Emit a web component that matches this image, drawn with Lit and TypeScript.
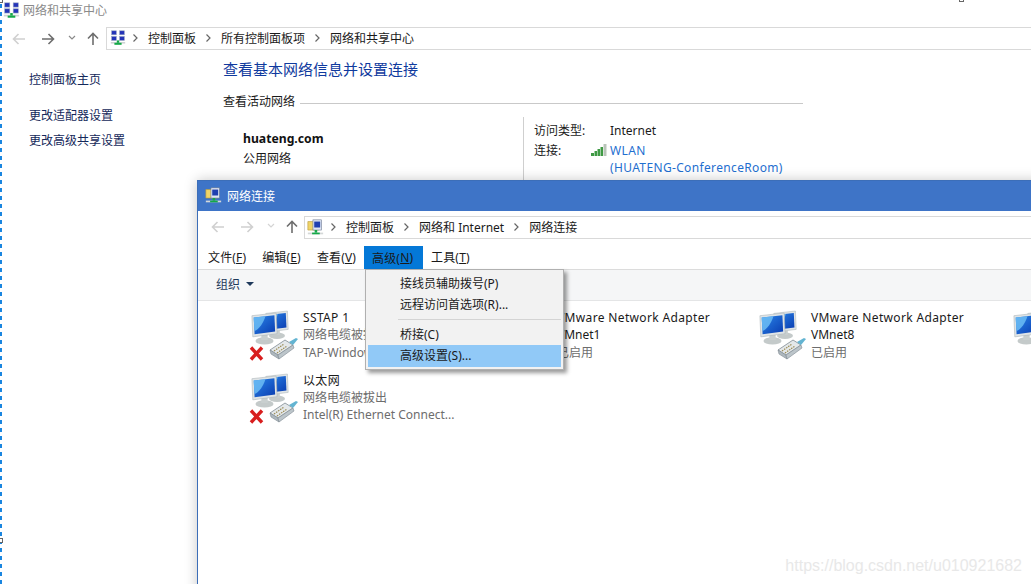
import { LitElement, html, css, svg } from "lit";
import { customElement } from "lit/decorators.js";

const netIcon = (size: number, kind: "grid" | "folder") => html`
  <svg class="small-ico" width=${size} height=${size} viewBox="0 0 20 20">
    ${kind === "folder"
      ? svg`<path d="M1 3h6l1 1h6v9H1z" fill="#f0d468" stroke="#b89a3a" stroke-width=".7"/>
            <rect x="7" y="1" width="10" height="12" fill="#dfe6f2" stroke="#6b7690" stroke-width=".7"/>
            <rect x="8.500" y="3" width="7" height="7" fill="#1f3fb0"/>
            <rect x="1" y="16" width="18" height="2" fill="#d4d8d8"/>
            <rect x="9" y="13" width="3" height="3" fill="#14a848"/><rect x="6" y="16" width="9" height="2" fill="#14a848"/>`
      : svg`<rect x="2" y="1" width="6" height="5" fill="#2434b8" stroke="#9aa8c0" stroke-width=".7"/>
            <rect x="12" y="1" width="6" height="5" fill="#2434b8" stroke="#9aa8c0" stroke-width=".7"/>
            <rect x="2" y="8" width="6" height="5" fill="#2434b8" stroke="#9aa8c0" stroke-width=".7"/>
            <rect x="12" y="8" width="6" height="5" fill="#2434b8" stroke="#9aa8c0" stroke-width=".7"/>
            <rect x="1" y="15" width="18" height="2" fill="#cfd4d4"/>
            <rect x="8.500" y="13" width="3" height="3" fill="#14a848"/><rect x="5.500" y="16" width="9" height="2.500" fill="#14a848"/>`}
  </svg>`;

const monitor = (dx: number, dy: number, s: number) => svg`
  <g transform="translate(${dx} ${dy}) scale(${s})">
    <ellipse cx="15" cy="31" rx="10" ry="4" fill="#c4caca"/>
    <rect x="11.500" y="24" width="7" height="6" fill="#c9cfcf"/>
    <path d="M1 3 L28 0 L29 23 L2 26.500 Z" fill="#dfe4e6" stroke="#a7b0b4" stroke-width=".6"/>
    <path d="M3 5 L26 2.500 L26.800 20.500 L4 23.500 Z" fill="url(#scr)"/>
    <path d="M3 5 L16 3.600 C14 11 9 18 3.800 20 Z" fill="#6cbdf5" opacity=".85"/>
  </g>`;

const adapterIcon = (cross: boolean) => html`
  <svg class="adapter" width="50" height="52" viewBox="0 0 50 52">
    <defs><linearGradient id="scr" x1="0" y1="0" x2="1" y2="1">
      <stop offset="0" stop-color="#2a86ea"/><stop offset="1" stop-color="#0a3cb0"/></linearGradient></defs>
    ${monitor(17, 2, 0.8)}
    ${monitor(3, 4, 0.9)}
    <path d="M22 41 L37 31 L45 36 L30 46 Z" fill="#e4e8ea" stroke="#7f8a92" stroke-width=".8"/>
    <path d="M22 41 L23 45 L31 50 L30 46 Z" fill="#aeb8be" stroke="#7f8a92" stroke-width=".6"/>
    <path d="M31 50 L46 39 L45 36 L30 46 Z" fill="#bcc5ca" stroke="#7f8a92" stroke-width=".6"/>
    <path d="M26 42 L36 35 M29 44 L39 37" stroke="#9a8a52" stroke-width="1.200" stroke-dasharray="1.500 1"/>
    <path d="M41 33 L48 29 L50 30 L45 36 Z" fill="#63b4d2"/>
    ${cross ? svg`<path d="M3 38.500 L14 50.500 M14 38.500 L3 50.500" stroke="#d81e1e" stroke-width="3.400"/>` : ""}
  </svg>`;

const arrow = (d: string, c: string, w = 1.6) => html`
  <svg width="16" height="16" viewBox="0 0 16 16"><path d=${d} fill="none" stroke=${c} stroke-width=${w}/></svg>`;
const LEFT = "M14 8H2.500M7.500 3L2.500 8l5 5";
const RIGHT = "M2 8h11.500M8.500 3l5 5-5 5";
const UP = "M8 14V2.500M3 7.500l5-5 5 5";

const sep = html`<svg class="sep" width="5" height="8" viewBox="0 0 5 8"><path d="M.5 .5L4 4 .5 7.500" fill="none" stroke="#666" stroke-width="1.200"/></svg>`;

const adapters = [
  { n: "SSTAP 1", a: "网络电缆被拔出", b: "TAP-Windows Adapter V9", x: true },
  { n: "VMware Network Adapter", a: "VMnet1", b: "已启用", x: false, dark: true },
  { n: "VMware Network Adapter", a: "VMnet8", b: "已启用", x: false, dark: true },
  { n: "", a: "", b: "", x: false, dark: true },
  { n: "以太网", a: "网络电缆被拔出", b: "Intel(R) Ethernet Connect...", x: true },
];

@customElement("app-root")
export class AppRoot extends LitElement {
  static styles = css`
    :host { display: block; width: 1031px; height: 584px; position: relative; overflow: hidden; background: #fff;
      font-family: "Noto Sans", "Noto Sans CJK SC", sans-serif; font-size: 12px; color: #1a1a1a; }
    .dash { position: absolute; left: 0; top: 4px; bottom: 0; width: 2px; background: repeating-linear-gradient(180deg, #1a86e0 0 4px, transparent 4px 8px); }
    .handle { position: absolute; box-sizing: border-box; border: 1px solid #666; background: #fff; }
    .h-top { left: 959px; top: -3px; width: 5px; height: 5px; }
    .h-left { left: -2px; top: 538px; width: 5px; height: 5px; }
    .h-corner { left: -2px; top: -2px; width: 5px; height: 5px; }
    .back { display: flex; flex-direction: column; height: 100%; }
    .b-title { height: 27px; display: flex; align-items: flex-start; gap: 3px; padding: 2px 0 0 3px; color: #8a8a8a; font-size: 12px; flex: none; box-sizing: border-box; line-height: 16px; }
    .b-title span { padding-top: 1px; }
    .b-nav { height: 23px; display: flex; align-items: center; padding-left: 11px; flex: none; }
    .navbtns { display: flex; align-items: center; }
    .b-nav .navbtns { gap: 13px; width: 95px; }
    .caretbox { margin: 0 -8px 0 -5px; }
    .addr { flex: 1; height: 23px; box-sizing: border-box; border: 1px solid #d9d9d9; border-right: 0; display: flex; align-items: center; padding: 0 0 2px 3px; gap: 10px; color: #1a1a1a; white-space: nowrap; }
    .addr .small-ico { margin-right: -3px; }
    .b-body { flex: 1; display: grid; grid-template-columns: 223px 1fr; }
    .side { padding: 21px 0 0 29px; color: #14285a; }
    .side div { line-height: 18px; }
    .side .first { margin-bottom: 18px; }
    .side .second { margin-bottom: 7px; }
    .main { padding-top: 8px; }
    .h1 { font-size: 15px; line-height: 22px; color: #0f3a9e; }
    .sect { display: flex; align-items: center; gap: 5px; width: 580px; margin-top: 13px; line-height: 18px; }
    .sect i { flex: 1; height: 1px; background: #c9c9c9; margin-top: 3px; }
    .net { display: grid; grid-template-columns: 300px 1fr; margin-top: 6px; }
    .net-l { padding: 13px 0 0 20px; }
    .net-l b { display: block; font-size: 12.2px; line-height: 18px; color: #111; margin-bottom: 1px; }
    .net-l span { line-height: 20px; }
    .net-r { border-left: 1px solid #cfcfcf; padding: 4px 0 0 10px; height: 70px; }
    .kv { display: grid; grid-template-columns: 57px 19px auto; line-height: 20px; }
    .kv .val { grid-column: 3; }
    .kv .link { color: #1f6fd0; line-height: 17px; padding-top: 1px; letter-spacing: .35px; }
    .sig { align-self: start; margin-top: 3px; }

    .win { position: absolute; left: 197px; top: 180px; width: 900px; height: 420px; box-sizing: border-box; background: #fff; border: 1px solid #3c6eb8; box-shadow: 0 0 12px rgba(0,0,0,.22); display: flex; flex-direction: column; }
    .w-title { height: 30px; background: #3e74c7; color: #fff; display: flex; align-items: center; gap: 5px; padding: 0 0 1px 7px; box-sizing: border-box; flex: none; font-size: 12px; }
    .w-nav { height: 32px; display: flex; align-items: center; padding-left: 12px; flex: none; }
    .w-nav .navbtns { gap: 13px; width: 94px; }
    .w-nav .addr { height: 23px; padding: 0 0 0 2px; }
    .menus { height: 27px; display: flex; flex: none; border-bottom: 1px solid #dcdcdc; box-sizing: border-box; padding-left: 2px; align-items: stretch; }
    .menus span { padding: 2px 8px 0; display: flex; align-items: center; box-sizing: border-box; letter-spacing: .15px; }
    .menus span.on { background: #0478d7; margin-top: 3px; padding-top: 0; width: 59px; }
    .menus u { text-underline-offset: 1px; }
    .tool { height: 31px; background: #f5f6f7; border-bottom: 1px solid #e4e5e6; flex: none; display: flex; align-items: center; padding: 0 0 2px 18px; gap: 6px; box-sizing: border-box; color: #1e395b; }
    .caret { width: 0; height: 0; border: 4px solid transparent; border-top: 4px solid #1e395b; border-bottom: 0; }
    .list { display: grid; grid-template-columns: repeat(4, 254px); grid-auto-rows: 62.5px; padding: 8px 0 0 50px; }
    .item { display: flex; gap: 5px; }
    .info { line-height: 17.5px; white-space: nowrap; }
    .info .g { color: #6d6d6d; }
    .info .d { color: #1a1a1a; }
    .info .name { letter-spacing: .35px; line-height: 17px; }
    .menu { position: absolute; left: 365px; top: 269px; width: 199px; box-sizing: border-box; height: 101px; background: #f2f2f2; border: 1px solid #b0b0b0; box-shadow: 3px 3px 4px rgba(0,0,0,.4); padding: 3px 2px; color: #1a1a1a; }
    .mi { height: 21px; line-height: 21px; padding-left: 32px; }
    .mi.sel { background: #91c9f7; height: 22px; line-height: 21px; }
    .msep { height: 1px; background: #d4d4d4; margin: 4px 0 4px 30px; }
    .wm { position: absolute; right: 9px; top: 557px; font-family: "Liberation Sans", sans-serif; font-size: 16px; color: #e8e8e8; line-height: 18px; }
  `;

  render() {
    return html`
      <div class="back">
        <div class="b-title">${netIcon(17, "grid")}<span>网络和共享中心</span></div>
        <div class="b-nav">
          <div class="navbtns">
            ${arrow(LEFT, "#d0d0d0")}
            ${arrow(RIGHT, "#6e6e6e")}
            <span class="caretbox">${arrow("M5 7l3 3 3-3", "#8a8a8a", 1.2)}</span>
            ${arrow(UP, "#6e6e6e")}
          </div>
          <div class="addr">
            ${netIcon(16, "grid")} ${sep}
            <span>控制面板</span>${sep}<span>所有控制面板项</span>${sep}<span>网络和共享中心</span>
          </div>
        </div>
        <div class="b-body">
          <div class="side">
            <div class="first">控制面板主页</div>
            <div class="second">更改适配器设置</div>
            <div>更改高级共享设置</div>
          </div>
          <div class="main">
            <div class="h1">查看基本网络信息并设置连接</div>
            <div class="sect"><span>查看活动网络</span><i></i></div>
            <div class="net">
              <div class="net-l"><b>huateng.com</b><span>公用网络</span></div>
              <div class="net-r">
                <div class="kv"><span>访问类型:</span><span class="val">Internet</span></div>
                <div class="kv">
                  <span>连接:</span>
                  <svg class="sig" width="16" height="12" viewBox="0 0 16 12">
                    <path d="M0 9h3v3H0zM3.500 7h2.500v5H3.500zM6.500 5h2.500v7H6.500zM9.500 3h2.500v9H9.500z" fill="#3f9a44"/>
                    <path d="M12.500 0h3v12h-3z" fill="#b9c4b9"/>
                  </svg>
                  <div class="link">WLAN<br />(HUATENG-ConferenceRoom)</div>
                </div>
              </div>
            </div>
          </div>
        </div>
      </div>
      <div class="dash"></div>
      <div class="handle h-top"></div>
      <div class="handle h-left"></div>
      <div class="handle h-corner"></div>

      <div class="win">
        <div class="w-title">${netIcon(17, "folder")}<span>网络连接</span></div>
        <div class="w-nav">
          <div class="navbtns">
            ${arrow(LEFT, "#d0d0d0")}
            ${arrow(RIGHT, "#d0d0d0")}
            <span class="caretbox">${arrow("M5 7l3 3 3-3", "#d4d4d4", 1.2)}</span>
            ${arrow(UP, "#6e6e6e")}
          </div>
          <div class="addr">
            ${netIcon(17, "folder")} ${sep}
            <span>控制面板</span>${sep}<span>网络和 Internet</span>${sep}<span>网络连接</span>
          </div>
        </div>
        <div class="menus">
          <span>文件(<u>F</u>)</span>
          <span>编辑(<u>E</u>)</span>
          <span>查看(<u>V</u>)</span>
          <span class="on">高级(<u>N</u>)</span>
          <span>工具(<u>T</u>)</span>
        </div>
        <div class="tool"><span>组织</span><i class="caret"></i></div>
        <div class="list">
          ${adapters.map(
            (a) => html`<div class="item">
              ${adapterIcon(a.x)}
              <div class="info">
                <div class="d name">${a.n}</div>
                <div class=${a.dark ? "d" : "g"}>${a.a}</div>
                <div class="g">${a.b}</div>
              </div>
            </div>`
          )}
        </div>
      </div>

      <div class="menu">
        <div class="mi">接线员辅助拨号(P)</div>
        <div class="mi">远程访问首选项(R)...</div>
        <div class="msep"></div>
        <div class="mi">桥接(C)</div>
        <div class="mi sel">高级设置(S)...</div>
      </div>
      <div class="wm">https://blog.csdn.net/u010921682</div>
    `;
  }
}
